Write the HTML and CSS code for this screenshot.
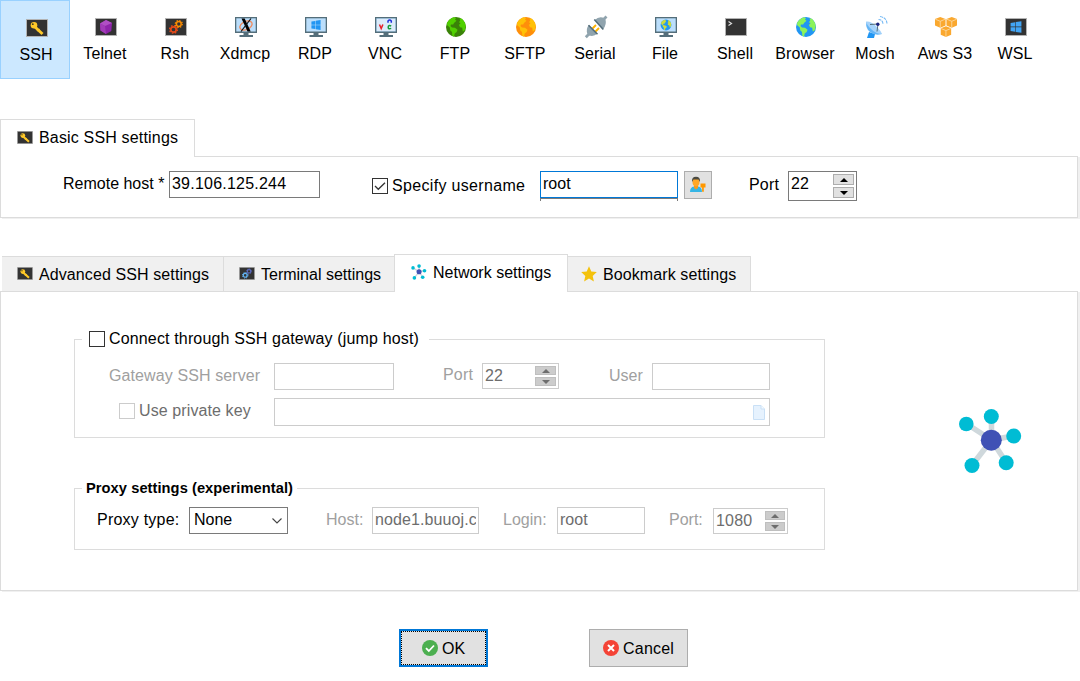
FILE: index.html
```
<!DOCTYPE html>
<html lang="en">
<head>
<meta charset="utf-8">
<title>Session settings</title>
<link rel="stylesheet" href="styles.css">
</head>
<body>
<svg class="defs" width="0" height="0">
  <defs>
    <symbol id="term" viewBox="0 0 24 24">
      <path d="M1 3h22v18H1z" fill="#b3b3b3"/><path d="M2 4h20v16H2z" fill="#333"/>
    </symbol>
    <symbol id="monitor" viewBox="0 0 24 24">
      <path d="M1 2h22v16H1z" fill="#546e7a"/><path d="M2.300 3.300h19.400v13.200H2.300z" fill="#bbdefb"/>
      <path d="M9.500 18h5v2h-5zM5.500 20h13.500v2H5.500z" fill="#546e7a"/>
    </symbol>
    <symbol id="key" viewBox="0 0 24 24">
      <path d="M9.500 10.500l8 7.500" stroke="#ffc928" stroke-width="2.900"/>
      <circle cx="9" cy="9.300" r="3.300" fill="#ffc928"/><circle cx="7.800" cy="8.200" r=".9" fill="#443b20"/>
      <path d="M12 15l2.500-2" stroke="#ffc928" stroke-width="1.500"/>
    </symbol>
    <symbol id="gears" viewBox="0 0 24 24">
      <circle class="gear-a" cx="9.500" cy="14.500" r="2.700" fill="none" stroke-width="1.700"/>
      <circle class="gear-a" cx="9.500" cy="14.500" r="3.900" fill="none" stroke-width="1.300" stroke-dasharray="1.600 1.463"/>
      <circle class="gear-b" cx="14.800" cy="9" r="2.400" fill="none" stroke-width="1.500"/>
      <circle class="gear-b" cx="14.800" cy="9" r="3.500" fill="none" stroke-width="1.200" stroke-dasharray="1.400 1.349"/>
    </symbol>
    <symbol id="globe" viewBox="0 0 24 24">
      <circle class="sea" cx="12" cy="12" r="10"/>
      <path class="land" d="M3.200 7.500Q5.500 3.500 9.500 2.300l2.500.7-1 1.800 1.500 1L10 8l-.8 1.500L7 9.500l-.5 1.500 1.500 1.500 3 .3 2.500 2-.8 2.200-2 1.500-.7 3.200-1.700-1-.3-3.700-1.800-1.800-.4-2.700L3 10zM15.500 3.300l2.500.5 2.800 3.700.9 3.500-.9 4.300-2 1.200-.6-3.700-2.200-.6-1-2.200 1.600-2-1.800-.8 1.400-1.400z"/>
    </symbol>
    <symbol id="winlogo" viewBox="0 0 24 24">
      <path d="M2 4.500l8.500-1.400v8.200H2zM11.600 2.900L22 1.200v10.100H11.600zM2 12.500h8.500v8.300L2 19.400zM11.600 12.500H22v10.200l-10.400-1.700z"/>
    </symbol>
    <symbol id="network" viewBox="0 0 64 66">
      <path d="M32.500 32L7.500 15.800M32.500 32V8.500M32.500 32l22.500-4.300M32.500 32l14.800 22.500M32.500 32L13 57.300" stroke="#cfd8dc" stroke-width="5.500"/>
      <g fill="#00bcd4"><circle cx="7.300" cy="16" r="7.300"/><circle cx="32.300" cy="8.500" r="7.500"/><circle cx="54.700" cy="28" r="7.500"/><circle cx="47.200" cy="54.700" r="7.500"/><circle cx="13" cy="57.500" r="7.500"/></g>
      <circle cx="32.300" cy="32.200" r="10.500" fill="#3f51b5"/>
    </symbol>
    <symbol id="cube" viewBox="0 0 12 12">
      <path d="M6 .5l5.500 2v6.800L6 11.700.5 9.300V2.500z" fill="#faa82f"/>
      <path d="M.8 2.800L6 5l5.200-2.200M6 5v6.500" fill="none" stroke="#fde0b0" stroke-width=".8"/>
    </symbol>
  </defs>
</svg>

<nav class="toolbar">
  <div class="tool selected"><svg class="ico"><use href="#term"/><use href="#key"/></svg><span>SSH</span></div>
  <div class="tool"><svg class="ico" viewBox="0 0 24 24"><use href="#term"/><path d="M12 5l6 3-.7 8L12 19l-5.500-3.500L6 8.500z" fill="#8e24aa"/><path d="M12 5l-6 3.500 5 2.500 7-3z" fill="#b04fc4"/><path d="M11 11l1 8-5.500-3.500L6 8.500z" fill="#a23bb8"/></svg><span>Telnet</span></div>
  <div class="tool"><svg class="ico rsh"><use href="#term"/><use href="#gears"/></svg><span>Rsh</span></div>
  <div class="tool"><svg class="ico" viewBox="0 0 24 24"><use href="#monitor"/><ellipse cx="12" cy="10.500" rx="6.500" ry="4" fill="none" stroke="#f08a5d" stroke-width="1.300" transform="rotate(-25 12 10.500)"/><path d="M7.500 3.500h3.200l6 13h-3.200z" fill="#000"/><path d="M17 3.500L7 16.500" stroke="#111" stroke-width="1.200"/></svg><span>Xdmcp</span></div>
  <div class="tool"><svg class="ico" viewBox="0 0 24 24"><use href="#monitor"/><use href="#winlogo" x="6.500" y="4.500" width="11" height="11" fill="#2196f3"/></svg><span>RDP</span></div>
  <div class="tool"><svg class="ico" viewBox="0 0 24 24"><use href="#monitor"/><path d="M3 4h18v12H3z" fill="#dcebfa"/><path d="M5.500 9.500l1.700 4 1.700-4" fill="none" stroke="#e8202a" stroke-width="1.500"/><path d="M14 7.800V6q1.700-2 3.300 0v1.800" fill="none" stroke="#2230dd" stroke-width="1.500"/><path d="M17.200 11q-3-1.200-3 1.200t3 1.200" fill="none" stroke="#15993b" stroke-width="1.500"/></svg><span>VNC</span></div>
  <div class="tool"><svg class="ico green"><use href="#globe"/></svg><span>FTP</span></div>
  <div class="tool"><svg class="ico orange"><use href="#globe"/></svg><span>SFTP</span></div>
  <div class="tool"><svg class="ico" viewBox="0 0 24 24"><path d="M1.800 22.200L5 19M19.500 4.500l3-3" stroke="#90a4ae" stroke-width="2.800"/><path d="M8 14l4-4M11 17l4-4" stroke="#ffb300" stroke-width="1.900"/><path d="M5 9.800l8.300 8.800Q10 22 5 20.500L3.500 19Q1.500 14 5 9.800zM10.700 5l8.600 9q3.500-4.500 2.200-9.500L20 3q-5-2-9.300 2z" fill="#90a4ae"/><path d="M4.500 10.300l9 9M10.300 4.500l9 10" stroke="#546e7a" stroke-width="1.600"/></svg><span>Serial</span></div>
  <div class="tool"><svg class="ico file" viewBox="0 0 24 24"><use href="#monitor"/><use href="#globe" x="5.500" y="3.500" width="13" height="13"/></svg><span>File</span></div>
  <div class="tool"><svg class="ico" viewBox="0 0 24 24"><use href="#term"/><path d="M4.500 6.500l3 2-3 2" fill="none" stroke="#ddd" stroke-width="1.200"/></svg><span>Shell</span></div>
  <div class="tool"><svg class="ico blue"><use href="#globe"/></svg><span>Browser</span></div>
  <div class="tool"><svg class="ico" viewBox="0 0 24 24"><path d="M3 23l2-6 6 2-1 4z" fill="#2196f3"/><path d="M2.500 6.500Q1 13 6 17t12 2z" fill="#64b5f6"/><path d="M2.500 6.500Q7 6 12 11t6 8Q12 19 7 14T2.500 6.500z" fill="#a6d3fa"/><path d="M6 9.500l8-.5-1 7.500" fill="none" stroke="#546e7a" stroke-width="1"/><circle cx="13.800" cy="9.300" r="1.700" fill="#1a237e"/><path d="M14.500 4.500q4 0 4.500 4.500M16 1.500q6.500 1 7 7" fill="none" stroke="#74b9f5" stroke-width="1.100" stroke-dasharray="3 .8"/></svg><span>Mosh</span></div>
  <div class="tool"><svg class="ico" viewBox="0 0 24 24"><use href="#cube" x=".5" y="1.500" width="11.500" height="11.500"/><use href="#cube" x="12" y="1.500" width="11.500" height="11.500"/><use href="#cube" x="6.200" y="10.800" width="11.500" height="11.500"/></svg><span>Aws S3</span></div>
  <div class="tool"><svg class="ico" viewBox="0 0 24 24"><use href="#term"/><use href="#winlogo" x="5.500" y="5.500" width="13" height="13" fill="#42a5f5"/></svg><span>WSL</span></div>
</nav>

<section class="basic">
  <div class="tabs">
    <div class="tab tab-basic active"><svg class="mini" viewBox="1 3 22 18"><use href="#term" width="24" height="24"/><use href="#key" width="24" height="24"/></svg><span class="w2">Basic SSH settings</span></div>
  </div>
  <div class="panel panel-basic">
    <label class="l-host">Remote host *</label>
    <input class="field f-host w3" value="39.106.125.244">
    <span class="check c-user"><svg viewBox="0 0 16 16"><path d="M3 8l3.300 3.300L13 4.700" fill="none" stroke="#333" stroke-width="1.300"/></svg></span>
    <label class="l-user w4">Specify username</label>
    <div class="userbox"><input class="field f-root" value="root"><div class="under"></div></div>
    <button class="userbtn"><svg viewBox="0 0 18 18" width="18" height="18"><path d="M1 16q0-5 4-5.500h4q4 .5 4 5.500z" fill="#35b5e5"/><path d="M5 9h4v3l-2 1.500L5 12z" fill="#f59a1c"/><ellipse cx="7" cy="6" rx="3.500" ry="4.300" fill="#ffa726"/><path d="M3 6Q2.500.8 7 .8T11 6L9.500 3.600h-5z" fill="#4a4a42"/><path d="M11.500 7.500h5v4h-1.700v4.300h-1.700v-4.300h-1.600z" fill="#ff9800"/></svg></button>
    <label class="l-port w2">Port</label>
    <div class="spin s-port"><input value="22"><span class="arrows"><i class="up"></i><i class="down"></i></span></div>
  </div>
</section>

<section class="details">
  <div class="tabs tabs-details">
    <div class="tab t-adv"><svg class="mini" viewBox="1 3 22 18"><use href="#term" width="24" height="24"/><use href="#key" width="24" height="24"/></svg><span class="w1">Advanced SSH settings</span></div>
    <div class="tab t-term"><svg class="mini bluegears" viewBox="1 3 22 18"><use href="#term" width="24" height="24"/><use href="#gears" width="24" height="24"/></svg><span>Terminal settings</span></div>
    <div class="tab t-net active"><svg class="mini-net"><use href="#network"/></svg><span>Network settings</span></div>
    <div class="tab t-book"><svg class="mini-star" viewBox="0 0 16 16"><path d="M8 .3l2.300 5.200 5.500.6-4.100 3.800 1.200 5.500L8 12.600l-4.900 2.800 1.200-5.500L.2 6.100l5.500-.6z" fill="#f4c20d"/></svg><span class="w1">Bookmark settings</span></div>
  </div>
  <div class="panel panel-details">
    <div class="groups">
      <fieldset class="gateway">
        <legend><span class="check"></span><span class="w5">Connect through SSH gateway (jump host)</span></legend>
        <div class="row row-server">
          <label class="dim l-server w1">Gateway SSH server</label>
          <input class="field off f-server">
          <label class="dim l-gport w2">Port</label>
          <div class="spin off s-gport"><input value="22"><span class="arrows"><i class="up"></i><i class="down"></i></span></div>
          <label class="dim l-guser">User</label>
          <input class="field off f-guser">
        </div>
        <div class="row">
          <span class="check off c-key"></span>
          <label class="gray l-key w1">Use private key</label>
          <div class="field off f-key"><svg viewBox="0 0 12 15" width="12" height="15"><path d="M.5.500h7.500l3.500 3.500v10.500H.5z" fill="#e6f2fe" stroke="#c9e0f6"/><path d="M8 .5V4h3.500" fill="#f5faff" stroke="#c9e0f6"/></svg></div>
        </div>
      </fieldset>
      <fieldset class="proxy">
        <legend>Proxy settings (experimental)</legend>
        <div class="row row-proxy">
          <label class="l-type w3">Proxy type:</label>
          <div class="combo"><span>None</span><svg viewBox="0 0 12 8" width="12" height="8"><path d="M1.500 1.500L6 6l4.500-4.500" fill="none" stroke="#444" stroke-width="1.100"/></svg></div>
          <label class="dim l-phost">Host:</label>
          <input class="field off f-phost w1" value="node1.buuoj.c">
          <label class="dim l-login">Login:</label>
          <input class="field off f-login" value="root">
          <label class="dim l-pport">Port:</label>
          <div class="spin off s-pport"><input class="w3" value="1080"><span class="arrows"><i class="up"></i><i class="down"></i></span></div>
        </div>
      </fieldset>
    </div>
    <svg class="netart"><use href="#network"/></svg>
  </div>
</section>

<footer class="actions">
  <button class="btn ok"><svg viewBox="0 0 16 16"><circle cx="8" cy="8" r="8" fill="#4caf50"/><path d="M4 8.200l2.800 2.800L12 5.500" fill="none" stroke="#fff" stroke-width="1.800"/></svg><span>OK</span></button>
  <button class="btn cancel"><svg viewBox="0 0 16 16"><circle cx="8" cy="8" r="8" fill="#f44336"/><path d="M5 5l6 6M11 5l-6 6" stroke="#fff" stroke-width="2"/></svg><span class="w3">Cancel</span></button>
</footer>
</body>
</html>
```
FILE: styles.css
```
* { box-sizing: border-box; }
body {
  margin: 0;
  width: 1080px;
  height: 681px;
  overflow: hidden;
  background: #fff;
  color: #000;
  font: 16px/20px "Liberation Sans", Arial, sans-serif;
}
.defs { display: block; }
svg { display: block; flex: none; }
label, span { white-space: nowrap; }
label { flex: none; }
input, button { font: inherit; color: inherit; margin: 0; border-radius: 0; outline: none; }
.w1 { letter-spacing: .1px; }
.w5 { letter-spacing: .15px; }
.w2 { letter-spacing: .17px; }
.w3 { letter-spacing: .22px; }
.w4 { letter-spacing: .33px; }

/* protocol toolbar */
.toolbar { display: flex; height: 79px; padding-left: 1px; }
.tool {
  width: 70px;
  flex: none;
  display: flex;
  flex-direction: column;
  align-items: center;
  padding-top: 15px;
  gap: 5px;
}
.tool span { margin-right: 2px; letter-spacing: .1px; }
.tool.selected {
  margin: 0 1px 0 -1px;
  padding: 15px 0 0 3px;
  background: #cce8ff;
  border: 1px solid #99d1ff;
}
.tool.selected span { margin-right: 1px; }
.ico { width: 24px; height: 24px; }
.rsh { --a: #e64a19; --b: #fb8c00; }
.bluegears { --a: #64b5f6; --b: #5c6bc0; }
.gear-a { stroke: var(--a); }
.gear-b { stroke: var(--b); }
.sea { fill: var(--sea); }
.land { fill: var(--land); }
.green { --sea: #3a8208; --land: #50d000; }
.orange { --sea: #ff8f0a; --land: #ffc107; }
.blue { --sea: #2196f3; --land: #8bf35a; }
.file { --sea: #2196f3; --land: #cddc39; }

/* tab strips and panels */
.basic { margin-top: 40px; }
.details { margin-top: 36px; }
.tabs { display: flex; align-items: flex-end; position: relative; }
.tabs-details { padding-left: 2px; height: 37px; }
.tab {
  display: flex;
  flex: none;
  height: 35px;
  background: #f0f0f0;
  border: 1px solid #dcdcdc;
  border-width: 1px 1px 0 0;
}
.tab.active { background: #fff; height: 38px; margin-bottom: -1px; border-left-width: 1px; z-index: 1; }
.tab-basic { width: 195px; padding: 8px 0 0 16px; gap: 6px; }
.tab-basic .mini { margin-top: 3px; }
.mini { width: 16px; height: 13px; margin-top: 2px; }
.t-adv { width: 222px; padding: 8px 0 0 15px; gap: 6px; }
.t-term { width: 170px; padding: 8px 0 0 15px; gap: 6px; border-right-width: 0; }
.t-net { width: 174px; padding: 8px 0 0 16px; gap: 6px; }
.t-book { width: 183px; padding: 8px 0 0 13px; gap: 6px; }
.mini-net { width: 16px; height: 16px; margin-top: 1px; }
.mini-star { width: 16px; height: 16px; margin-top: 1px; }
.panel {
  width: 1078px;
  display: flex;
  align-items: flex-start;
  border: 1px solid #dcdcdc;
  box-shadow: 2px 1px 0 #f0f0f0;
}
.panel-basic { height: 62px; padding-left: 62px; }
.panel-details { height: 300px; padding-left: 73px; }

/* controls */
.field {
  flex: none;
  height: 27px;
  padding: 0 2px 2px;
  border: 1px solid #7a7a7a;
  background: #fff;
}
.field.off, .spin.off { border-color: #ccc; color: #6d6d6d; }
.dim { color: #a0a0a0; }
.gray { color: #6d6d6d; }
.check { flex: none; width: 16px; height: 16px; border: 1px solid #333; background: #fff; }
.check svg { width: 16px; height: 16px; margin: -1px; }
.check.off { border-color: #ccc; }
.spin {
  flex: none;
  display: flex;
  justify-content: space-between;
  border: 1px solid #7a7a7a;
  background: #fff;
  padding: 2px;
}
.spin input { width: 42px; height: 18px; padding: 0; border: 0; background: none; }
.arrows { display: flex; flex-direction: column; gap: 2px; width: 21px; }
.arrows i { flex: 1; display: flex; align-items: center; justify-content: center; background: #e1e1e1; border: 1px solid #adadad; }
.arrows i::before { content: ""; border: 4px solid transparent; }
.arrows .up::before { border-top: 0; border-bottom-color: #000; }
.arrows .down::before { border-bottom: 0; border-top-color: #000; }
.off .arrows i { background: #ccc; border-color: #bfbfbf; }
.off .arrows .up::before { border-bottom-color: #6d6d6d; }
.off .arrows .down::before { border-top-color: #6d6d6d; }

/* basic settings row */
.l-host { width: 106px; margin-top: 17px; }
.f-host { width: 151px; margin-top: 14px; }
.c-user { margin: 21px 4px 0 52px; }
.l-user { width: 148px; margin-top: 19px; }
.userbox { width: 138px; margin-top: 14px; }
.f-root { display: block; width: 138px; border-color: #0078d7; }
.under { height: 3px; border: 1px solid #7a7a7a; border-bottom: 0; }
.userbtn { width: 28px; height: 28px; margin: 14px 0 0 6px; padding: 0 0 0 4px; background: #e1e1e1; border: 1px solid #adadad; }
.l-port { margin: 18px 0 0 37px; width: 39px; }
.s-port { width: 69px; height: 30px; margin-top: 14px; }
.s-port input { margin-top: 1px; }

/* gateway and proxy groups */
.groups { width: 751px; margin-top: 38px; }
fieldset { margin: 0; padding: 0; border: 1px solid #dcdcdc; min-width: 0; }
legend { display: flex; height: 19px; margin-left: 7px; padding: 0; line-height: 18px; }
.gateway { height: 108px; }
.gateway legend { width: 347px; padding-left: 7px; gap: 4px; }
.gateway legend .check { margin-top: 1px; }
.proxy { height: 71px; margin-top: 41px; }
.proxy legend { width: 215px; padding-left: 4px; font-size: 14.67px; font-weight: bold; letter-spacing: .06px; }
.row { display: flex; align-items: flex-start; }
.row-server { height: 49px; padding: 14px 0 0 34px; }
.l-server { width: 165px; margin-top: 3px; }
.f-server { width: 120px; }
.l-gport { width: 39px; margin: 2px 0 0 49px; }
.s-gport { width: 77px; height: 26px; }
.s-gport input, .s-pport input { margin-top: 1px; }
.l-guser { width: 43px; margin: 3px 0 0 50px; }
.f-guser { width: 118px; }
.c-key { margin: 5px 4px 0 44px; }
.l-key { width: 135px; margin-top: 3px; }
.f-key { width: 496px; height: 28px; display: flex; justify-content: flex-end; padding: 6px 4px 0; }
.row-proxy { padding: 9px 0 0 22px; }
.l-type { width: 92px; margin-top: 3px; }
.combo { width: 99px; height: 27px; display: flex; justify-content: space-between; padding: 2px 4px 0; border: 1px solid #7a7a7a; }
.combo svg { margin-top: 7px; }
.l-phost { width: 46px; margin: 3px 0 0 38px; }
.f-phost { width: 107px; }
.l-login { width: 54px; margin: 3px 0 0 24px; }
.f-login { width: 88px; }
.l-pport { width: 44px; margin: 3px 0 0 24px; }
.s-pport { width: 75px; height: 26px; margin-top: 1px; }
.s-pport .arrows { width: 20px; }
.netart { width: 64px; height: 66px; margin: 116px 0 0 134px; }

/* dialog buttons */
.actions { display: flex; gap: 101px; padding: 38px 0 0 399px; }
.btn { display: flex; align-items: center; gap: 4px; height: 38px; padding: 0; background: #e1e1e1; border: 1px solid #adadad; }
.btn svg { width: 16px; height: 16px; }
.btn span { margin-top: 2px; }
.ok { width: 89px; padding-left: 21px; border: 2px solid #0078d7; outline: 1px dotted #000; outline-offset: -3px; }
.cancel { width: 99px; padding-left: 13px; }
```
